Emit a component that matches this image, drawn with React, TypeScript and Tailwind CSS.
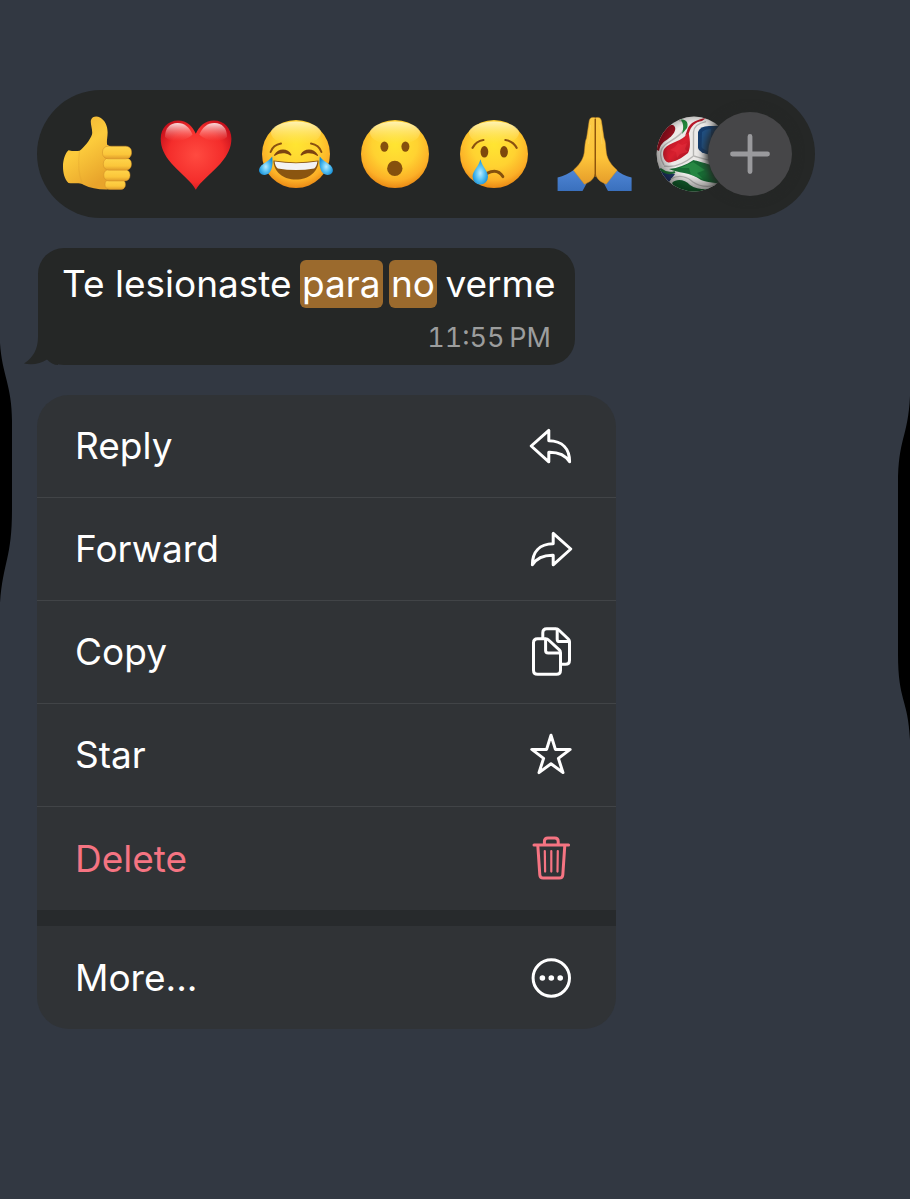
import type { ReactNode } from "react";
import { clsx } from "clsx";

type Reaction = {
	label: string;
	icon: ReactNode;
};

type MenuItem = {
	label: string;
	icon: ReactNode;
	isDanger?: boolean;
};

const reactions: Reaction[] = [
	{ label: "Thumbs up", icon: <ThumbsUp /> },
	{ label: "Red heart", icon: <Heart /> },
	{ label: "Tears of joy", icon: <Joy /> },
	{ label: "Surprised", icon: <Surprised /> },
	{ label: "Crying", icon: <Crying /> },
	{ label: "Folded hands", icon: <FoldedHands /> },
	{ label: "Football", icon: <Ball /> },
];

const menuItems: MenuItem[] = [
	{
		label: "Reply",
		icon: <path d="M4.2 24 21.8 8.4V18.8C35.5 19 42.6 27 42.6 39.8 38.4 33 32.5 30 21.8 30.2V39.8Z" />,
	},
	{
		label: "Forward",
		icon: <path d="M43.8 24 26.2 8.4V18.8C12.5 19 5.4 27 5.4 39.8 9.6 33 15.5 30 26.2 30.2V39.8Z" />,
	},
	{
		label: "Copy",
		icon: (
			<>
				<path d="M10.6 10.8H18.6Q20.4 10.8 21.6 12L32.3 21.9Q33.5 23.1 33.5 25V42.2Q33.5 46.2 29.5 46.2H10.6Q6.5 46.2 6.5 42.2V14.8Q6.5 10.8 10.6 10.8Z" />
				<path d="M18.6 11.2V22.4Q18.6 25 21.2 25H33" />
				<path d="M15.8 10V4.8Q15.8.8 19.8.8H28.8Q30.6.8 31.8 2L41.3 11Q42.5 12.2 42.5 14V32.2Q42.5 36.2 38.5 36.2H34.4" />
				<path d="M30.2 1.2V11.2Q30.2 13.6 32.6 13.6H42" />
			</>
		),
	},
	{
		label: "Star",
		icon: (
			<path d="M24 4.2 28.4 18.4H43.2L31.4 27.4 36 41.6 24 32.8 12 41.6 16.6 27.4 4.8 18.4H19.6Z" />
		),
	},
	{
		label: "Delete",
		isDanger: true,
		icon: (
			<>
				<path d="M7 10H41.6M17.4 9.6V6.4Q17.4 3 20.8 3H27.8Q31.2 3 31.2 6.4V9.6" />
				<path d="M10.8 10.4 12.8 39.8Q13.1 43 16.2 43H32.4Q35.5 43 35.8 39.8L37.8 10.4" />
				<path d="M17.8 16 18.1 36.6M24.3 16V36.6M30.8 16 30.5 36.6" strokeWidth="2.2" />
			</>
		),
	},
];

export default function App() {
	return (
		<main
			className="relative flex min-h-screen flex-col items-start gap-[30px] overflow-hidden
				bg-[#323842] px-[37px] pt-[90px] pb-12 font-['Inter','Noto_Sans',sans-serif] text-white"
		>
			<ScreenEdges />
			<ReactionBar />
			<MessageBubble />
			<ContextMenu />
		</main>
	);
}

function ReactionBar() {
	return (
		<section
			aria-label="Reactions"
			className="flex w-full max-w-[778px] items-center rounded-[64px] bg-[#252726] py-[22px] pr-[23px]
				pl-[22px]"
		>
			<div className="flex min-w-0 flex-1 items-center justify-between">
				{reactions.map((reaction) => (
					<button key={reaction.label} type="button" aria-label={reaction.label}>
						<svg viewBox="0 0 76 76" className="block size-[76px]" aria-hidden="true">
							{reaction.icon}
						</svg>
					</button>
				))}
			</div>

			<button
				type="button"
				aria-label="More reactions"
				className="relative -ml-[23px] grid size-[84px] shrink-0 place-items-center rounded-full
					bg-[#464648] shadow-[0_0_8px_3px_#252726]"
			>
				<svg viewBox="0 0 40 40" className="size-10" aria-hidden="true">
					<path d="M20 2.5V37.5M2.5 20H37.5" stroke="#9a9a9d" strokeWidth="4.8" strokeLinecap="round" />
				</svg>
			</button>
		</section>
	);
}

function MessageBubble() {
	return (
		<article
			className="relative ml-px flex w-full max-w-[537px] flex-col rounded-[26px] bg-[#252726] px-6 pt-3
				pb-2.5"
		>
			<svg
				viewBox="0 0 34 48"
				className="absolute bottom-0 -left-3.5 h-12 w-[34px]"
				aria-hidden="true"
			>
				<path d="M14 0V20C14 32 9 41 0 46.5 8 48.5 17 46.5 23 42.5 26 46 30 48 34 48V0Z" fill="#252726" />
			</svg>
			<p className="relative text-[37px] leading-[48px] whitespace-nowrap">
				Te lesionaste <Highlight>para</Highlight> <Highlight>no</Highlight> verme
			</p>
			<time className="relative mt-3 self-end text-[27px] leading-[35px] text-[#9c9d9d] tabular-nums">
				11:55{"\u202f"}PM
			</time>
		</article>
	);
}

function Highlight(props: { children: ReactNode }) {
	return (
		<mark className="-mx-0.5 inline-block rounded-md bg-[#9b6a2d] px-0.5 text-white">{props.children}</mark>
	);
}

function ContextMenu() {
	return (
		<nav
			aria-label="Message actions"
			className="w-full max-w-[579px] overflow-hidden rounded-[32px] bg-[#303336] text-[37px]"
		>
			<div className="divide-y divide-[#414447]">
				{menuItems.map((item) => (
					<MenuRow key={item.label} item={item} />
				))}
			</div>
			<div className="h-4 bg-[#272a2c]" />
			<MenuRow
				item={{
					label: "More...",
					icon: (
						<>
							<circle cx="24.3" cy="24" r="18.2" />
							<g fill="currentColor" stroke="none">
								<circle cx="15.4" cy="24" r="2.8" />
								<circle cx="24.3" cy="24" r="2.8" />
								<circle cx="33.2" cy="24" r="2.8" />
							</g>
						</>
					),
				}}
			/>
		</nav>
	);
}

function MenuRow(props: { item: MenuItem }) {
	const { item } = props;

	return (
		<button
			type="button"
			className={clsx(
				"flex h-[103px] w-full items-center justify-between pr-[41px] pl-[38px] text-left",
				item.isDanger ? "text-[#f57482]" : "text-white"
			)}
		>
			<span>{item.label}</span>
			<svg
				viewBox="0 -2 48 52"
				className="h-[52px] w-12"
				fill="none"
				stroke="currentColor"
				strokeWidth="3"
				strokeLinecap="round"
				strokeLinejoin="round"
				aria-hidden="true"
			>
				{item.icon}
			</svg>
		</button>
	);
}

function ScreenEdges() {
	return (
		<>
			<svg viewBox="0 0 12 260" className="absolute top-[343px] left-0 h-[260px] w-3" aria-hidden="true">
				<path d="M0 0C2 32 12 42 12 78V166C12 216 3 218 0 260Z" />
			</svg>
			<svg viewBox="0 0 12 344" className="absolute top-[396px] right-0 h-[344px] w-3" aria-hidden="true">
				<path d="M12 0C10 42 0 42 0 88V258C0 306 10 302 12 344Z" />
			</svg>
		</>
	);
}

function ThumbsUp() {
	return (
		<>
			<defs>
				<linearGradient id="thumb-skin" x1="0" y1="0" x2=".5" y2="1">
					<stop offset="0" stopColor="#eeb033" />
					<stop offset=".5" stopColor="#fccb3c" />
					<stop offset="1" stopColor="#e8a42b" />
				</linearGradient>
				<linearGradient id="thumb-finger" x1="0" y1="0" x2="0" y2="1">
					<stop offset="0" stopColor="#ffd54b" />
					<stop offset=".65" stopColor="#fbc63a" />
					<stop offset="1" stopColor="#e09c2a" />
				</linearGradient>
			</defs>
			<path
				d="M9.5 34.2Q15 35.6 20.6 34.8C24.6 31.5 31 24.5 33 18.5 34 14 31 7.5 32 4 33 .4 37.5-.4 41 1.4 46.5 4.5 48.8 10.5 48.6 17 48.5 22 47.4 25 48.2 28.8L54 32V70L48 73.4C39 73.5 31 72.2 25 69 20 66 15 68 9.5 67 5.5 63 4 57 4 50.5 4 44 6.2 37 9.5 34.2Z"
				fill="url(#thumb-skin)"
			/>
			<path d="M20.5 35.5C19 46 19.5 58 23 67" fill="none" stroke="#dfa02d" strokeWidth="1.2" opacity=".3" />
			<g fill="url(#thumb-finger)" stroke="#cf8c27" strokeWidth=".5">
				<rect x="46" y="63.5" width="20.4" height="10" rx="4.6" />
				<rect x="44.8" y="53.4" width="26.2" height="11.6" rx="5.2" />
				<rect x="44.4" y="42" width="28" height="12.2" rx="5.4" />
				<rect x="43.5" y="30.2" width="29" height="12.6" rx="5.6" />
			</g>
		</>
	);
}

function Heart() {
	return (
		<>
			<defs>
				<radialGradient id="heart-fill" cx=".5" cy=".5" r=".6">
					<stop offset="0" stopColor="#ff4a40" />
					<stop offset=".65" stopColor="#f42d2b" />
					<stop offset="1" stopColor="#c50f1b" />
				</radialGradient>
				<linearGradient id="heart-shine" x1="0" y1="0" x2="0" y2="1">
					<stop offset="0" stopColor="#fff" stopOpacity=".85" />
					<stop offset="1" stopColor="#ff8078" stopOpacity="0" />
				</linearGradient>
			</defs>
			<path
				d="M37.8 73.8C34 66 24.5 59.5 13.5 47.5 6 39 2.7 31 2.7 22.8 2.7 12.4 9.8 4.5 20 4.5 29 4.5 34.5 10 37.8 17.8 41.2 10 47 4.5 56 4.5 66.2 4.5 73.4 12.4 73.4 22.8 73.4 31 70 39 62.5 47.5 51.5 59.5 42 66 37.8 73.8Z"
				fill="url(#heart-fill)"
			/>
			<path d="M7 21C7 12 12 7 19.5 7 27 7 31.5 11.5 34.5 18.5 28 25 14 28 7 21Z" fill="url(#heart-shine)" />
			<path d="M69 21C69 12 64 7 56.5 7 49 7 44.5 11.5 41.3 18.5 48 25 62 28 69 21Z" fill="url(#heart-shine)" />
		</>
	);
}

function Face(props: { id: string; children: ReactNode }) {
	const { id, children } = props;

	return (
		<>
			<defs>
				<radialGradient id={`${id}-face`} cx=".5" cy=".36" r=".66">
					<stop offset="0" stopColor="#ffe532" />
					<stop offset=".5" stopColor="#ffd231" />
					<stop offset=".8" stopColor="#fcb027" />
					<stop offset="1" stopColor="#e78312" />
				</radialGradient>
				<linearGradient id={`${id}-shine`} x1="0" y1="0" x2="0" y2="1">
					<stop offset="0" stopColor="#fffbd5" stopOpacity=".8" />
					<stop offset="1" stopColor="#ffec70" stopOpacity="0" />
				</linearGradient>
				<radialGradient id={`${id}-tear`} cx=".5" cy=".55" r=".55">
					<stop offset="0" stopColor="#b9ecff" />
					<stop offset=".5" stopColor="#59c2f3" />
					<stop offset="1" stopColor="#168ed6" />
				</radialGradient>
			</defs>
			<circle cx="38" cy="38" r="34" fill={`url(#${id}-face)`} />
			<ellipse cx="38" cy="17" rx="25" ry="11.5" fill={`url(#${id}-shine)`} />
			{children}
		</>
	);
}

function Joy() {
	return (
		<Face id="joy">
			<path d="M12.6 36Q15 29 23 27.6M63.4 36Q61 29 53 27.6" fill="none" stroke="#8a5110" strokeWidth="2" strokeLinecap="round" />
			<g fill="#7d4310">
				<path d="M16 39C18.5 35 21.5 33.4 25 33.4 28.6 33.4 31.6 35 33.4 38.6 33.6 39.6 32.6 39.8 31.8 39.2 27 36.6 22 36.8 17.4 39.6 16.4 40.2 15.6 39.8 16 39Z" />
				<path d="M60 39C57.5 35 54.5 33.4 51 33.4 47.4 33.4 44.4 35 42.6 38.6 42.4 39.6 43.4 39.8 44.2 39.2 49 36.6 54 36.8 58.6 39.6 59.6 40.2 60.4 39.8 60 39Z" />
			</g>
			<path d="M15.4 44.6Q38 48.2 60.6 44.6C60.4 56 50.6 63.6 38 63.6S15.6 56 15.4 44.6Z" fill="#8a5510" />
			<path d="M16.6 45.4Q38 49 59.4 45.4C59 49 57.6 51.4 56.2 52.6Q38 55.6 19.8 52.6C18 51 17 48.6 16.6 45.4Z" fill="#f3f2f4" />
			<path d="M14.2 40.6C15 47 14.6 53 11.4 56.8 8.4 60 3 59.4 1.4 56 .2 53 2.2 49.6 6 47.4 9.6 45.4 12 43.6 14.2 40.6Z" fill="url(#joy-tear)" />
			<path d="M61.8 40.6C61 47 61.4 53 64.6 56.8 67.6 60 73 59.4 74.6 56 75.8 53 73.8 49.6 70 47.4 66.4 45.4 64 43.6 61.8 40.6Z" fill="url(#joy-tear)" />
		</Face>
	);
}

function Surprised() {
	return (
		<Face id="wow">
			<g fill="#85500d">
				<ellipse cx="27.4" cy="30.6" rx="4" ry="5.2" />
				<ellipse cx="48.4" cy="30.6" rx="4" ry="5.2" />
				<circle cx="37.8" cy="52.4" r="7.7" />
			</g>
		</Face>
	);
}

function Crying() {
	return (
		<Face id="cry">
			<path d="M16.6 31.8Q20 25 27.4 24M60.6 31.8Q57 25 49.4 24" fill="none" stroke="#8a5110" strokeWidth="2.2" strokeLinecap="round" />
			<g fill="#7d480c">
				<ellipse cx="28.4" cy="35.8" rx="3.9" ry="5.8" />
				<ellipse cx="48" cy="35.8" rx="3.9" ry="5.8" />
			</g>
			<path d="M31 57.4Q41.5 51.8 46.8 60.6" fill="none" stroke="#85500d" strokeWidth="3" strokeLinecap="round" />
			<path d="M24.4 43.2C26 50.5 32 54.6 32 60.6A7.7 7.9 0 0 1 16.6 60.6C16.6 54.6 22.8 50.5 24.4 43.2Z" fill="url(#cry-tear)" />
		</Face>
	);
}

function FoldedHands() {
	return (
		<>
			<defs>
				<linearGradient id="pray-skin" x1="0" y1="0" x2="0" y2="1">
					<stop offset="0" stopColor="#fbc944" />
					<stop offset=".6" stopColor="#fdc43a" />
					<stop offset="1" stopColor="#e59c2a" />
				</linearGradient>
				<linearGradient id="pray-sleeve" x1="0" y1="0" x2="0" y2="1">
					<stop offset="0" stopColor="#4f86d6" />
					<stop offset="1" stopColor="#3a70bd" />
				</linearGradient>
			</defs>
			<path d="M1.6 61.4C7.5 60 13 57.2 18.4 53.4 22.5 58 27 63.5 30.6 67.6L26.5 75H1.6Z" fill="url(#pray-sleeve)" />
			<path d="M75.6 61.4C69.5 60 64 57.2 59.8 53.4 56 58 51 63.5 48 67.6L52 75H75.6Z" fill="url(#pray-sleeve)" />
			<g fill="url(#pray-skin)" stroke="#c98a24" strokeWidth=".5">
				<path d="M39.2 1.8C36 .8 33.8 1.6 33.2 4.8L30.6 22C29 25 29 30 28.2 37 27 44.5 22 50 17.4 54.2L28.4 68.2C34 66 39.2 63 39.2 55Z" />
				<path d="M39.4 1.8C42.6.8 44.8 1.6 45.4 4.8L48 22C49.6 25 49.6 30 50.4 37 51.6 44.5 56.4 50 61.2 54.2L50.2 68.2C44.6 66 39.4 63 39.4 55Z" />
			</g>
			<path d="M39.3 3V61" stroke="#8e550c" strokeWidth="1.4" />
			<path d="M34.6 9 32.6 28M44 9 46 28" stroke="#ffe07a" strokeWidth="1" opacity=".4" />
		</>
	);
}

function Ball() {
	return (
		<>
			<defs>
				<clipPath id="ball-clip">
					<circle cx="39" cy="38" r="37.4" />
				</clipPath>
				<radialGradient id="ball-shade" cx=".52" cy=".44" r=".58">
					<stop offset=".6" stopColor="#000" stopOpacity="0" />
					<stop offset="1" stopColor="#000" stopOpacity=".5" />
				</radialGradient>
				<linearGradient id="ball-red" x1="0" y1="0" x2="1" y2="1">
					<stop offset="0" stopColor="#a81224" />
					<stop offset=".55" stopColor="#d81f2e" />
					<stop offset="1" stopColor="#9c0f1f" />
				</linearGradient>
			</defs>
			<g clipPath="url(#ball-clip)">
				<rect width="76" height="76" fill="#eceae8" />
				<path d="M0 33C3 17 10 8 18 9 23 12 19 19 13 23 8 26 5 29 4 35Z" fill="#980f1e" />
				<path d="M24 4.6C30 5 31 10 28 15 23 22 14 25 9 30 4 35 5 43 9 49" fill="none" stroke="#b9b7b5" strokeWidth="1.4" />
				<path d="M25.5 3.6C31 2.6 34 7 32 12L27 18C29 12 28.5 7 25.5 3.6Z" fill="#22863b" />
				<path d="M33 12C36 6 43 3.4 51 2L47 5C40 6 36 10 34 17L30 20Z" fill="#b81828" />
				<path d="M33.6 16.6C35.6 26 35.4 33 33 37 27 42 19 46.6 13.4 46.4 8 45 6.6 36 9.6 32.4 15 26 27 26 33.6 16.6Z" fill="url(#ball-red)" />
				<path d="M23 27 27 29 32 27 30 33 33 36 25 38 22 42 21 36 15 34 20 31Z" fill="#e93440" opacity=".45" />
				<path d="M43 16Q45 10 54 10H76V42L56 39Q44 37 43 32Z" fill="#153d6e" />
				<path d="M47 16Q50 13 56 13V36Q48 34 46.5 31Z" fill="#285f93" opacity=".6" />
				<path d="M38.5 40V16Q39 8 51 5.6M38.5 40C30 47 20 52 9 50M39 40C46 42 54 46 76 46" fill="none" stroke="#b5b4b2" strokeWidth="1.4" />
				<path d="M14 53C23 52 31 49 38.5 44 47 46 55 50 76 51V70C62 66 54 67 46 64 36 56 22 57 14 53Z" fill="#176c34" />
				<path d="M25 52 38 46 50 54 42 57 48 63 36 59 34 52Z" fill="#36a150" opacity=".5" />
				<path d="M2 50C8 56 14 57 20 58L14 66C8 62 4 56 2 50Z" fill="#21386f" />
				<path d="M5 53C10 57 15 58 20 56" fill="none" stroke="#1f7a39" strokeWidth="2.4" />
				<path d="M17 67C22 62 30 64 35 69 42 74 52 74 64 72V76H30C24 74 19 71 17 67Z" fill="#14642e" />
				<path d="M16 63C24 58 33 61 38 66 45 71 54 71 62 69" fill="none" stroke="#b9b8b6" strokeWidth="1.2" />
				<rect width="76" height="76" fill="url(#ball-shade)" />
			</g>
		</>
	);
}
